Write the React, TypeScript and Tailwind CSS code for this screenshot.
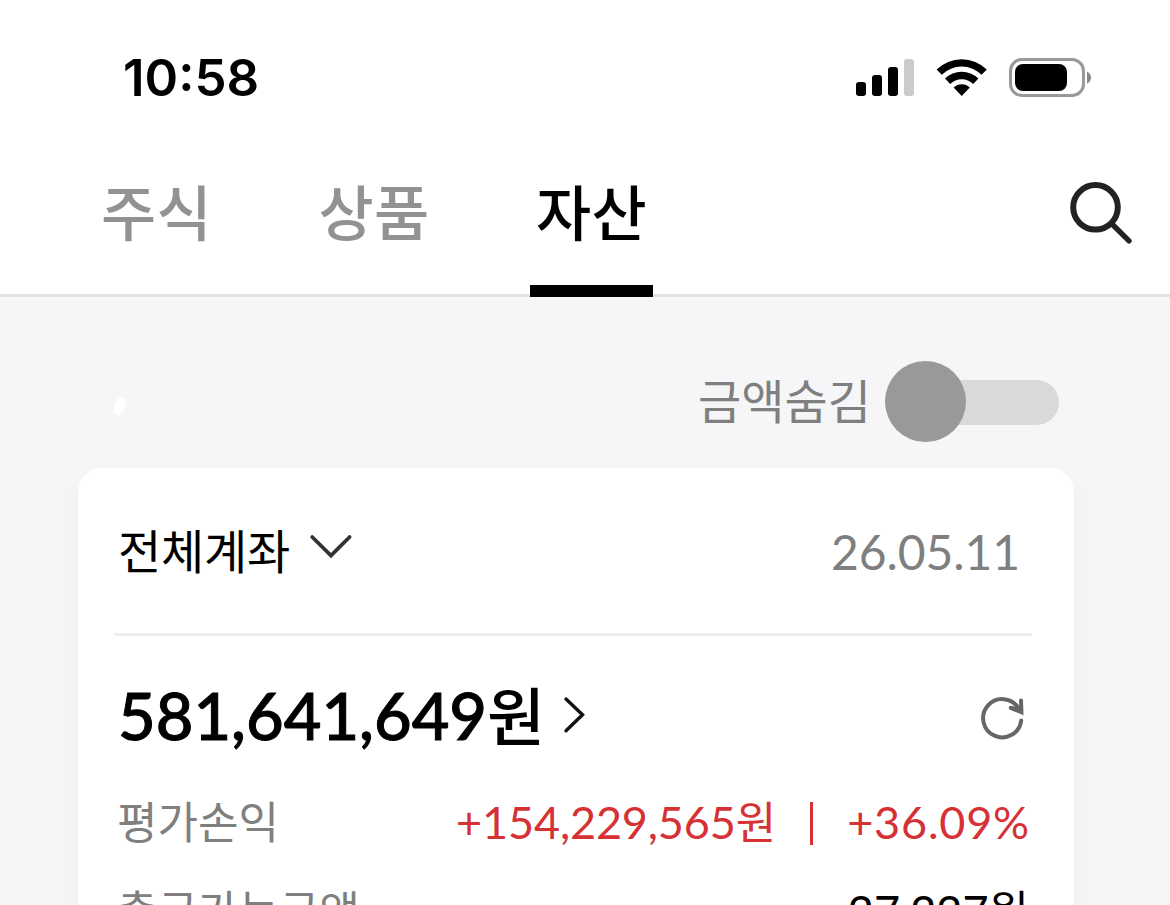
import { useState } from "react";

const TABS = ["주식", "상품", "자산"] as const;

const NOTO = "font-['Noto_Sans_CJK_KR',sans-serif]";
const LATO = "font-['Lato','Noto_Sans_CJK_KR',sans-serif]";

function StatusIcons() {
  return (
    <svg className="mt-[10px]" width="240" height="44" viewBox="854 56 240 44">
      <rect x="856" y="82" width="10" height="14" rx="3" />
      <rect x="872" y="75" width="10" height="21" rx="3" />
      <rect x="888" y="67" width="10" height="29" rx="3" />
      <rect x="904" y="59" width="10" height="37" rx="3" fill="#cbcbcb" />

      <path d="M936.6 69.6A35.6 35.6 0 0 1 986.8 69.6L981.6 74.8A28.2 28.2 0 0 0 941.8 74.8Z" />
      <path d="M945 78.6A23.6 23.6 0 0 1 978.4 78.6L973.2 83.9A16.4 16.4 0 0 0 950.2 83.9Z" />
      <path d="M953.6 87.6A11.5 11.5 0 0 1 969.8 87.6L961.7 96Z" />

      <rect x="1010.5" y="59.5" width="73" height="36" rx="11.5" fill="none" stroke="#999" strokeWidth="3" />
      <rect x="1015" y="64" width="52" height="27" rx="8" />
      <path d="M1087 71.5Q1091 73.5 1091 77.5Q1091 81.5 1087 83.5Z" fill="#888" />
    </svg>
  );
}

function SearchIcon() {
  return (
    <svg width="66" height="66" viewBox="1068 180 66 66" fill="none" stroke="#222">
      <circle cx="1095.5" cy="207.3" r="22.3" strokeWidth="6" />
      <path d="M1112 224L1129 240.8" strokeWidth="5.4" strokeLinecap="round" />
    </svg>
  );
}

function RefreshIcon() {
  return (
    <svg width="46" height="46" viewBox="980 695 46 46" fill="none" stroke="#666" strokeWidth="4">
      <path d="M1021.2 720.4A19.1 19.1 0 1 1 1018.5 708.2" strokeLinecap="round" />
      <path d="M1021 700.4L1021.4 712.2L1010.8 707.8" strokeLinecap="round" />
      <path d="M1023.3 714.2L1010 709.6L1013 706L1020 708Z" fill="#666" stroke="none" />
    </svg>
  );
}

export default function App() {
  const [tab, setTab] = useState<(typeof TABS)[number]>("자산");
  const [hidden, setHidden] = useState(false);

  return (
    <div className={`h-[905px] w-[1170px] overflow-hidden bg-[#f6f6f8] text-black ${NOTO}`}>
      <header className="h-[297px] border-b-[3px] border-[#e1e1e4] bg-white">
        <div className="flex h-[155px] items-start justify-between pt-[46px] pr-[76px] pl-[123px]">
          <span className="font-['Inter',sans-serif] text-[51px] leading-[64px] font-semibold">
            10:58
          </span>
          <StatusIcons />
        </div>

        <div className="flex justify-between pr-9 pl-[95px]">
          <nav className="flex gap-[94.5px]">
            {TABS.map((name) => (
              <button
                key={name}
                onClick={() => setTab(name)}
                className={`h-[142px] w-[123px] border-b-[12px] pt-[15px] pb-[35px] text-[60px] leading-[80px] font-medium tracking-[0.3px] ${
                  tab === name
                    ? "border-black text-black"
                    : "border-transparent text-[#929294]"
                }`}
              >
                {name}
              </button>
            ))}
          </nav>
          <button className="mt-[25px] self-start" aria-label="검색">
            <SearchIcon />
          </button>
        </div>
      </header>

      <main className="pt-16">
        <div className="flex h-[81px] items-center justify-between pr-[111px] pl-[115px]">
          <span className="mt-[9px] h-[18px] w-[10px] rotate-[18deg] rounded-full bg-white" />
          <div className="flex items-center gap-[14px]">
            <span className="mb-[6px] text-[47px] leading-[60px] text-[#7f7f7f]">금액숨김</span>
            <button
              role="switch"
              aria-checked={hidden}
              aria-label="금액숨김"
              onClick={() => setHidden(!hidden)}
              className={`flex w-[174px] items-center ${hidden ? "flex-row-reverse" : ""}`}
            >
              <span className="z-10 size-[81px] shrink-0 rounded-full bg-[#999]" />
              <span className="-mx-10 mt-[2px] h-[45px] w-[133px] shrink-0 rounded-full bg-[#d9d9d9]" />
            </button>
          </div>
        </div>

        <section className="mt-[26px] mr-24 ml-[78px] h-[520px] rounded-[24px] bg-white pr-[42px] pl-9 shadow-[0_12px_24px_rgba(60,80,110,0.06)]">
          <div className="flex h-[168px] items-start justify-between border-b-[3px] border-[#eee] pt-[51px] pr-[12px] pl-1">
            <button className="flex items-start text-[47px] leading-[60px] tracking-[-0.2px]">
              전체계좌
              <svg className="mt-[15px] ml-[19px]" width="44" height="26" viewBox="0 0 44 26" fill="none" stroke="#333" strokeWidth="3.8">
                <path d="M3.2 3L22 21.5L40.6 3" strokeLinecap="round" />
              </svg>
            </button>
            <span className={`mt-[3px] text-[48px] leading-[60px] tracking-[-0.1px] text-[#7f7f7f] ${LATO}`}>
              26.05.11
            </span>
          </div>

          <div className="mt-[39px] flex h-20 items-start justify-between pr-[6px] pl-1">
            <button className="flex items-start">
              <span className={`text-[65px] leading-[80px] font-medium ${LATO}`}>
                <span className="[-webkit-text-stroke:1px_black]">581,641,649</span>
                <span className={`text-[63px] leading-none ${NOTO}`}>원</span>
              </span>
              <svg className="mt-5 ml-[17px]" width="24" height="40" viewBox="0 0 24 40" fill="none" stroke="#111" strokeWidth="3.4">
                <path d="M4 4L20.5 19.8L4 35.8" strokeLinecap="round" />
              </svg>
            </button>
            <button className="mt-5" aria-label="새로고침">
              <RefreshIcon />
            </button>
          </div>

          <div className="mt-[35px] flex h-[60px] items-baseline justify-between pr-[2px] pl-[3px] text-[44px] leading-[60px]">
            <span className="text-[#7f7f7f]">평가손익</span>
            <div className={`flex items-baseline text-[45px] text-[#d63134] ${LATO}`}>
              <span>
                <span className="tracking-[-0.15px]">+154,229,565</span>
                <span className={`text-[44px] leading-none ${NOTO}`}>원</span>
              </span>
              <span className="mr-[34px] ml-[34px] h-[43px] w-[3px] translate-y-[6px] bg-[#d63134]" />
              <span className="tracking-[0.8px]">+36.09%</span>
            </div>
          </div>

          <div className="mt-[29px] flex h-[60px] items-baseline justify-between pr-[3px] pl-[3px] text-[44px] leading-[60px]">
            <span className="text-[#7f7f7f]">출금가능금액</span>
            <span className={`text-[45px] ${LATO}`}>
              27,227
              <span className={`text-[44px] leading-none ${NOTO}`}>원</span>
            </span>
          </div>
        </section>
      </main>
    </div>
  );
}
